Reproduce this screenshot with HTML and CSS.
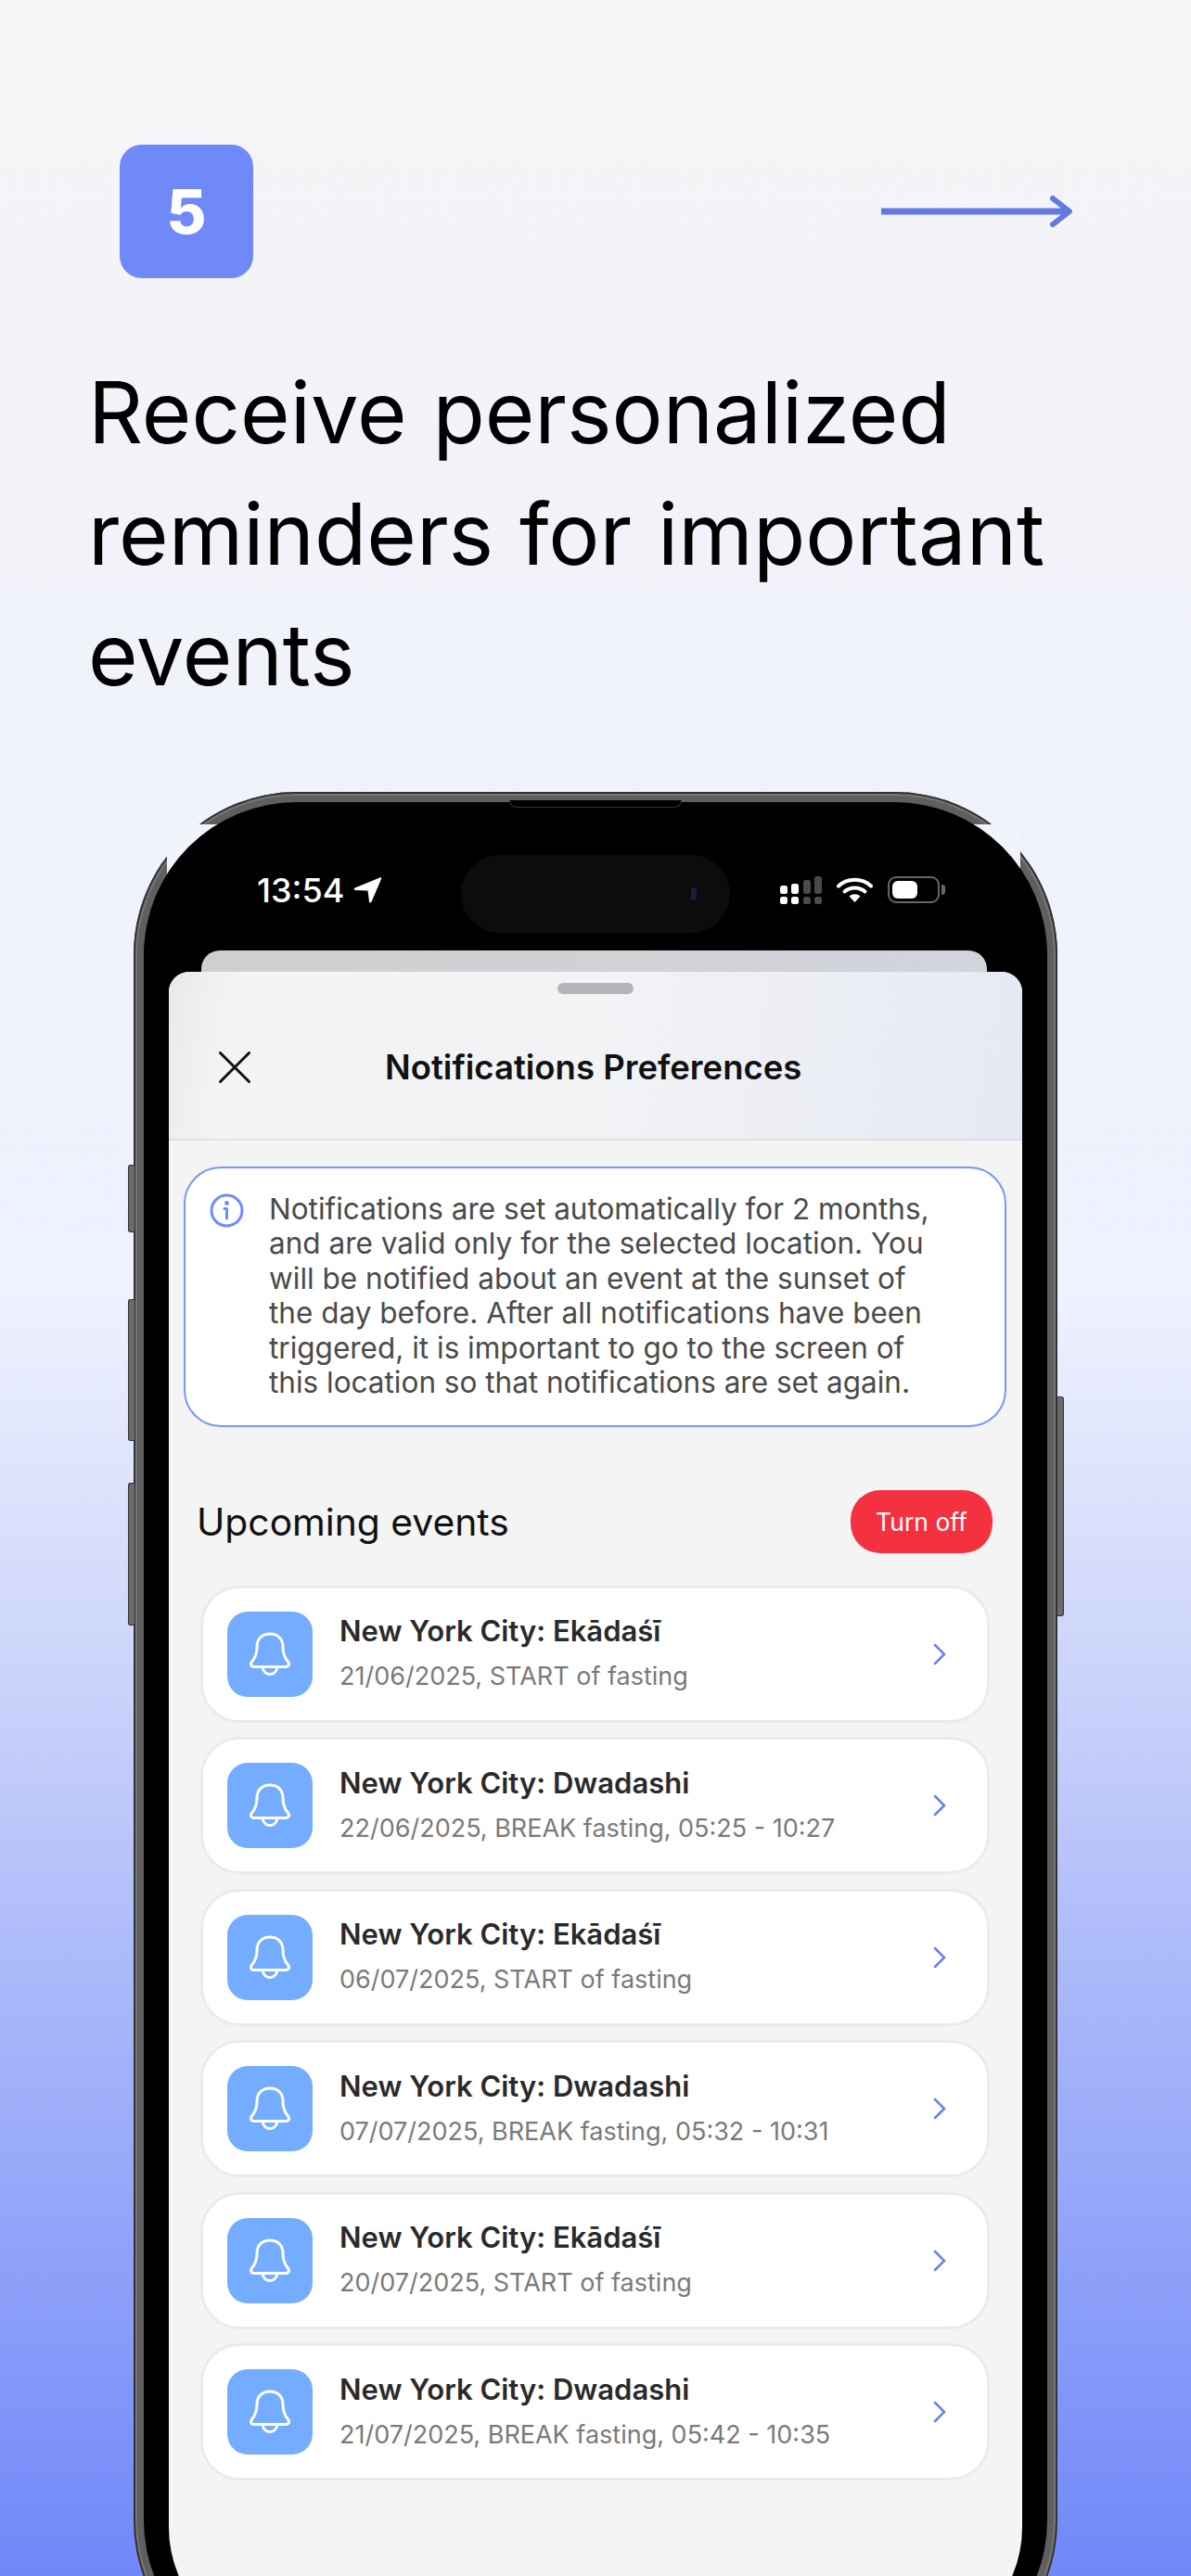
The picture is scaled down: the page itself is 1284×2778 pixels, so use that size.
FILE: index.html
```html
<!DOCTYPE html>
<html lang="en">
<head>
  <meta charset="UTF-8" />
  <meta name="viewport" content="width=device-width, initial-scale=1.0" />
  <title>Notifications</title>
  <link rel="stylesheet" href="styles.css">
</head>
<body>
  <div class="page">
    <div class="top-row">
      <div class="badge">5</div>
      <svg class="next-arrow" viewBox="0 0 206 36" width="206" height="36">
        <path d="M0 18H201" stroke="#6279e0" stroke-width="7" fill="none" />
        <path d="M185 4L203 18L185 32" stroke="#6279e0" stroke-width="6" stroke-linecap="round" stroke-linejoin="round" fill="none" />
      </svg>
    </div>

    <h1>Receive personalized reminders for important events</h1>

    <div class="phone">
      <span class="side-btn btn-action"></span>
      <span class="side-btn btn-up"></span>
      <span class="side-btn btn-down"></span>
      <span class="side-btn btn-power"></span>
      <span class="speaker"></span>

      <div class="bezel">
        <!-- Status bar -->
        <div class="status-bar">
          <div class="clock">
            <span>13:54</span>
            <svg viewBox="0 0 31 29" width="31" height="29">
              <path d="M1.5 12.5L28.5 1.5C29.8 1 30.5 1.8 30 3L19.5 27.5C18.8 29 17.2 28.8 17 27.2L15.5 15.5L2 15C.5 14.8 .2 13.2 1.5 12.5Z" fill="#fff" />
            </svg>
          </div>
          <div class="island"><span class="lens"></span></div>
          <div class="status-icons">
            <svg viewBox="0 0 45 30" width="45" height="30">
              <rect x="0" y="10" width="8" height="9" rx="2.5" fill="#fff" />
              <rect x="12" y="8" width="8" height="11" rx="2.5" fill="#fff" />
              <rect x="25" y="4" width="8" height="15" rx="2.5" fill="#4a4a4a" />
              <rect x="37" y="0" width="8" height="19" rx="2.5" fill="#4a4a4a" />
              <rect x="0" y="22" width="8" height="8" rx="2.5" fill="#fff" />
              <rect x="12" y="22" width="8" height="8" rx="2.5" fill="#fff" />
              <rect x="25" y="22" width="8" height="8" rx="2.5" fill="#4a4a4a" />
              <rect x="37" y="22" width="8" height="8" rx="2.5" fill="#4a4a4a" />
            </svg>
            <svg viewBox="0 0 39 27" width="39" height="27">
              <path d="M2 9.5C11.5 .5 27.5 .5 37 9.5" stroke="#fff" stroke-width="4" stroke-linecap="round" fill="none" />
              <path d="M8.5 15.5C14.5 10 24.5 10 30.5 15.5" stroke="#fff" stroke-width="4" stroke-linecap="round" fill="none" />
              <path d="M13.5 20.5C17 17.5 22 17.5 25.5 20.5L19.5 27Z" fill="#fff" />
            </svg>
            <div class="battery"><span class="battery-fill"></span></div>
          </div>
        </div>

        <div class="back-card"></div>

        <div class="sheet">
          <div class="sheet-head">
            <span class="handle"></span>
            <div class="sheet-title-row">
              <svg class="close-icon" viewBox="0 0 34 34" width="34" height="34">
                <path d="M1.5 1.5L32.5 32.5M32.5 1.5L1.5 32.5" stroke="#111" stroke-width="3" stroke-linecap="round" />
              </svg>
              <h2>Notifications Preferences</h2>
            </div>
          </div>

          <div class="info-box">
            <svg class="info-icon" viewBox="0 0 37 37" width="37" height="37">
              <circle cx="18.5" cy="18.5" r="16.5" stroke="#6f8dff" stroke-width="3" fill="none" />
              <circle cx="18.5" cy="10.5" r="2.4" fill="#6f8dff" />
              <path d="M16 16.5H18.5V27" stroke="#6f8dff" stroke-width="3" fill="none" stroke-linecap="round" stroke-linejoin="round" />
            </svg>
            <p>Notifications are set automatically for 2 months, and are valid only for the selected location. You will be notified about an event at the sunset of the day before. After all notifications have been triggered, it is important to go to the screen of this location so that notifications are set again.</p>
          </div>

          <div class="section-head">
            <h3>Upcoming events</h3>
            <button class="turn-off">Turn off</button>
          </div>

          <ul class="events">
            <li class="event">
              <div class="event-icon">
                <svg viewBox="0 0 92 92" width="92" height="92"><path d="M29 59.5H63C66.5 59.5 67.5 56.5 65.5 54C61 49 60 44 60 38C60 29 54 24 46 24C38 24 32 29 32 38C32 44 31 49 26.5 54C24.5 56.5 25.5 59.5 29 59.5ZM38 60C39 65 42.5 67.5 46 67.5C49.5 67.5 53 65 54 60" /></svg>
              </div>
              <div class="event-text">
                <div class="event-title">New York City: Ekādaśī</div>
                <div class="event-sub">21/06/2025, START of fasting</div>
              </div>
              <svg class="chevron" viewBox="0 0 14 24" width="14" height="24"><path d="M2 2L12 12L2 22" /></svg>
            </li>
            <li class="event">
              <div class="event-icon">
                <svg viewBox="0 0 92 92" width="92" height="92"><path d="M29 59.5H63C66.5 59.5 67.5 56.5 65.5 54C61 49 60 44 60 38C60 29 54 24 46 24C38 24 32 29 32 38C32 44 31 49 26.5 54C24.5 56.5 25.5 59.5 29 59.5ZM38 60C39 65 42.5 67.5 46 67.5C49.5 67.5 53 65 54 60" /></svg>
              </div>
              <div class="event-text">
                <div class="event-title">New York City: Dwadashi</div>
                <div class="event-sub">22/06/2025, BREAK fasting, 05:25 - 10:27</div>
              </div>
              <svg class="chevron" viewBox="0 0 14 24" width="14" height="24"><path d="M2 2L12 12L2 22" /></svg>
            </li>
            <li class="event">
              <div class="event-icon">
                <svg viewBox="0 0 92 92" width="92" height="92"><path d="M29 59.5H63C66.5 59.5 67.5 56.5 65.5 54C61 49 60 44 60 38C60 29 54 24 46 24C38 24 32 29 32 38C32 44 31 49 26.5 54C24.5 56.5 25.5 59.5 29 59.5ZM38 60C39 65 42.5 67.5 46 67.5C49.5 67.5 53 65 54 60" /></svg>
              </div>
              <div class="event-text">
                <div class="event-title">New York City: Ekādaśī</div>
                <div class="event-sub">06/07/2025, START of fasting</div>
              </div>
              <svg class="chevron" viewBox="0 0 14 24" width="14" height="24"><path d="M2 2L12 12L2 22" /></svg>
            </li>
            <li class="event">
              <div class="event-icon">
                <svg viewBox="0 0 92 92" width="92" height="92"><path d="M29 59.5H63C66.5 59.5 67.5 56.5 65.5 54C61 49 60 44 60 38C60 29 54 24 46 24C38 24 32 29 32 38C32 44 31 49 26.5 54C24.5 56.5 25.5 59.5 29 59.5ZM38 60C39 65 42.5 67.5 46 67.5C49.5 67.5 53 65 54 60" /></svg>
              </div>
              <div class="event-text">
                <div class="event-title">New York City: Dwadashi</div>
                <div class="event-sub">07/07/2025, BREAK fasting, 05:32 - 10:31</div>
              </div>
              <svg class="chevron" viewBox="0 0 14 24" width="14" height="24"><path d="M2 2L12 12L2 22" /></svg>
            </li>
            <li class="event">
              <div class="event-icon">
                <svg viewBox="0 0 92 92" width="92" height="92"><path d="M29 59.5H63C66.5 59.5 67.5 56.5 65.5 54C61 49 60 44 60 38C60 29 54 24 46 24C38 24 32 29 32 38C32 44 31 49 26.5 54C24.5 56.5 25.5 59.5 29 59.5ZM38 60C39 65 42.5 67.5 46 67.5C49.5 67.5 53 65 54 60" /></svg>
              </div>
              <div class="event-text">
                <div class="event-title">New York City: Ekādaśī</div>
                <div class="event-sub">20/07/2025, START of fasting</div>
              </div>
              <svg class="chevron" viewBox="0 0 14 24" width="14" height="24"><path d="M2 2L12 12L2 22" /></svg>
            </li>
            <li class="event">
              <div class="event-icon">
                <svg viewBox="0 0 92 92" width="92" height="92"><path d="M29 59.5H63C66.5 59.5 67.5 56.5 65.5 54C61 49 60 44 60 38C60 29 54 24 46 24C38 24 32 29 32 38C32 44 31 49 26.5 54C24.5 56.5 25.5 59.5 29 59.5ZM38 60C39 65 42.5 67.5 46 67.5C49.5 67.5 53 65 54 60" /></svg>
              </div>
              <div class="event-text">
                <div class="event-title">New York City: Dwadashi</div>
                <div class="event-sub">21/07/2025, BREAK fasting, 05:42 - 10:35</div>
              </div>
              <svg class="chevron" viewBox="0 0 14 24" width="14" height="24"><path d="M2 2L12 12L2 22" /></svg>
            </li>
          </ul>
        </div>
      </div>
    </div>
  </div>
</body>
</html>
```

FILE: styles.css
```css
:root {
  --azul: #7089f9;
  --azul-claro: #74adff;
  --linha: #7a96ff;
  --fundo-tela: #f4f4f4;
}

* {
  box-sizing: border-box;
  margin: 0;
  padding: 0;
}

body {
  font-family: Inter, "Noto Sans", sans-serif;
  overflow: hidden;
}

.page {
  width: 1284px;
  height: 2778px;
  overflow: hidden;
  padding-top: 156px;
  background: linear-gradient(180deg, #f5f5f6 0, #f0f2fb 860px, #eef1fe 1394px, #dfe4fc 1583px, #c5cffa 1866px, #a9b7fa 2148px, #8fa2f9 2431px, #7087f9 2778px);
}

.top-row {
  display: flex;
  justify-content: space-between;
  align-items: center;
  padding: 0 128px 0 129px;
}

.badge {
  width: 144px;
  height: 144px;
  display: flex;
  align-items: center;
  justify-content: center;
  border-radius: 24px;
  background: var(--azul);
  color: #fff;
  font-size: 66px;
  font-weight: 800;
}

h1 {
  margin: 80px 0 0 95px;
  width: 1120px;
  font-size: 92px;
  font-weight: 400;
  line-height: 130.5px;
  word-spacing: 2px;
  color: #000;
}

/* Phone frame */
.phone {
  position: relative;
  z-index: 0;
  width: 996px;
  height: 2040px;
  margin: 82px 0 0 144px;
  padding: 11px;
  border-radius: 176px;
  background: #5f5f5f;
  box-shadow: inset 0 0 0 2px #333, inset 0 0 0 4px #767676;
}

.phone::before {
  content: "";
  position: absolute;
  z-index: -1;
  top: 35px;
  left: 36px;
  width: 920px;
  height: 200px;
  background: #f2f4fb;
}

.side-btn {
  position: absolute;
  width: 7px;
  border: 1px solid #333;
  border-right: none;
  border-radius: 3px 0 0 3px;
  background: #6a6a6a;
}

.btn-action { left: -6px; top: 402px; height: 73px; }
.btn-up { left: -6px; top: 547px; height: 153px; }
.btn-down { left: -6px; top: 745px; height: 154px; }
.btn-power { left: auto; right: -7px; top: 652px; height: 237px; border: 1px solid #333; border-left: none; border-radius: 0 3px 3px 0; }

.speaker {
  position: absolute;
  top: 9px;
  left: 405px;
  width: 186px;
  height: 8px;
  border: 1px solid #333;
  border-top: none;
  border-radius: 0 0 8px 8px;
  background: #000;
  z-index: 2;
}

.bezel {
  display: flex;
  flex-direction: column;
  height: 100%;
  padding: 0 27px 27px;
  border-radius: 165px;
  background: #000;
}

/* Status bar */
.status-bar {
  display: flex;
  align-items: center;
  height: 160px;
  padding: 30px 0 0 95px;
  color: #fff;
}

.clock {
  display: flex;
  align-items: center;
  gap: 10px;
  width: 142px;
  font-size: 36px;
  font-weight: 500;
}

.island {
  display: flex;
  align-items: center;
  justify-content: flex-end;
  width: 290px;
  height: 84px;
  margin: 9px 0 0 78px;
  padding-right: 36px;
  border-radius: 42px;
  background: #0c0c0c;
}

.lens {
  width: 6px;
  height: 14px;
  border-radius: 3px;
  background: #1c1c3a;
}

.status-icons {
  display: flex;
  align-items: center;
  gap: 16px;
  margin-left: 54px;
}

.battery {
  position: relative;
  width: 56px;
  height: 29px;
  padding: 3px;
  border: 2px solid #666;
  border-radius: 9px;
}

.battery::after {
  content: "";
  position: absolute;
  top: 7px;
  right: -8px;
  width: 4px;
  height: 11px;
  border-radius: 0 3px 3px 0;
  background: #666;
}

.battery-fill {
  display: block;
  width: 27px;
  height: 100%;
  border-radius: 6px;
  background: #fff;
}

.back-card {
  height: 23px;
  margin: 0 38px 0 35px;
  border-radius: 20px 20px 0 0;
  background: linear-gradient(90deg, #cfcfcf, #d1d4dc);
}

/* Sheet */
.sheet {
  flex: 1;
  overflow: hidden;
  border-radius: 22px 22px 130px 130px;
  background: var(--fundo-tela);
}

.sheet-head {
  height: 182px;
  padding-top: 12px;
  border-bottom: 2px solid #e0e0e2;
  background: linear-gradient(100deg, #e9e9e9 0%, #f4f4f4 8%, #f2f3f5 50%, #e6e9f4 100%);
}

.handle {
  display: block;
  width: 82px;
  height: 12px;
  margin: 0 auto;
  border-radius: 6px;
  background: #b4b4ba;
}

.sheet-title-row {
  display: flex;
  align-items: center;
  height: 60px;
  margin-top: 49px;
  padding-left: 54px;
}

.close-icon {
  flex-shrink: 0;
}

h2 {
  margin-left: 145px;
  font-size: 36.5px;
  font-weight: 600;
  color: #111;
  white-space: nowrap;
}

.info-box {
  display: flex;
  align-items: flex-start;
  gap: 27px;
  height: 281px;
  margin: 28px 17px 0 16px;
  padding: 25px 60px 0 26px;
  border: 2px solid var(--linha);
  border-radius: 40px;
  background: #fff;
}

.info-icon {
  flex-shrink: 0;
  margin-top: 2px;
}

.info-box p {
  font-size: 31.5px;
  line-height: 37.6px;
  color: #4a4a4a;
}

.section-head {
  display: flex;
  justify-content: space-between;
  align-items: center;
  margin-top: 68px;
  padding: 0 32px 0 30px;
}

h3 {
  font-size: 40.8px;
  font-weight: 400;
  color: #111;
}

.turn-off {
  width: 153px;
  height: 68px;
  border: none;
  border-radius: 32px;
  background: #f4323f;
  color: #fff;
  font-family: inherit;
  font-size: 26.5px;
}

.events {
  display: flex;
  flex-direction: column;
  gap: 15.6px;
  margin: 35px 35px 0 34px;
  list-style: none;
}

.event {
  display: flex;
  align-items: center;
  height: 148px;
  padding: 0 44px 0 26px;
  border: 3px solid #ecebe7;
  border-radius: 42px;
  background: #fff;
}

.event-icon {
  width: 92px;
  height: 92px;
  flex-shrink: 0;
  border-radius: 22px;
  background: var(--azul-claro);
}

.event-icon svg {
  display: block;
  fill: none;
  stroke: #fff;
  stroke-width: 3;
  stroke-linejoin: round;
  stroke-linecap: round;
}

.event-text {
  flex: 1;
  margin-left: 29px;
}

.event-title {
  font-size: 31px;
  font-weight: 600;
  line-height: 32px;
  color: #2a2a2a;
}

.event-sub {
  margin-top: 17px;
  font-size: 27px;
  line-height: 32px;
  color: #7a7a7a;
}

.chevron {
  fill: none;
  stroke: #6580f0;
  stroke-width: 2.5;
  stroke-linecap: round;
  stroke-linejoin: round;
}
```
